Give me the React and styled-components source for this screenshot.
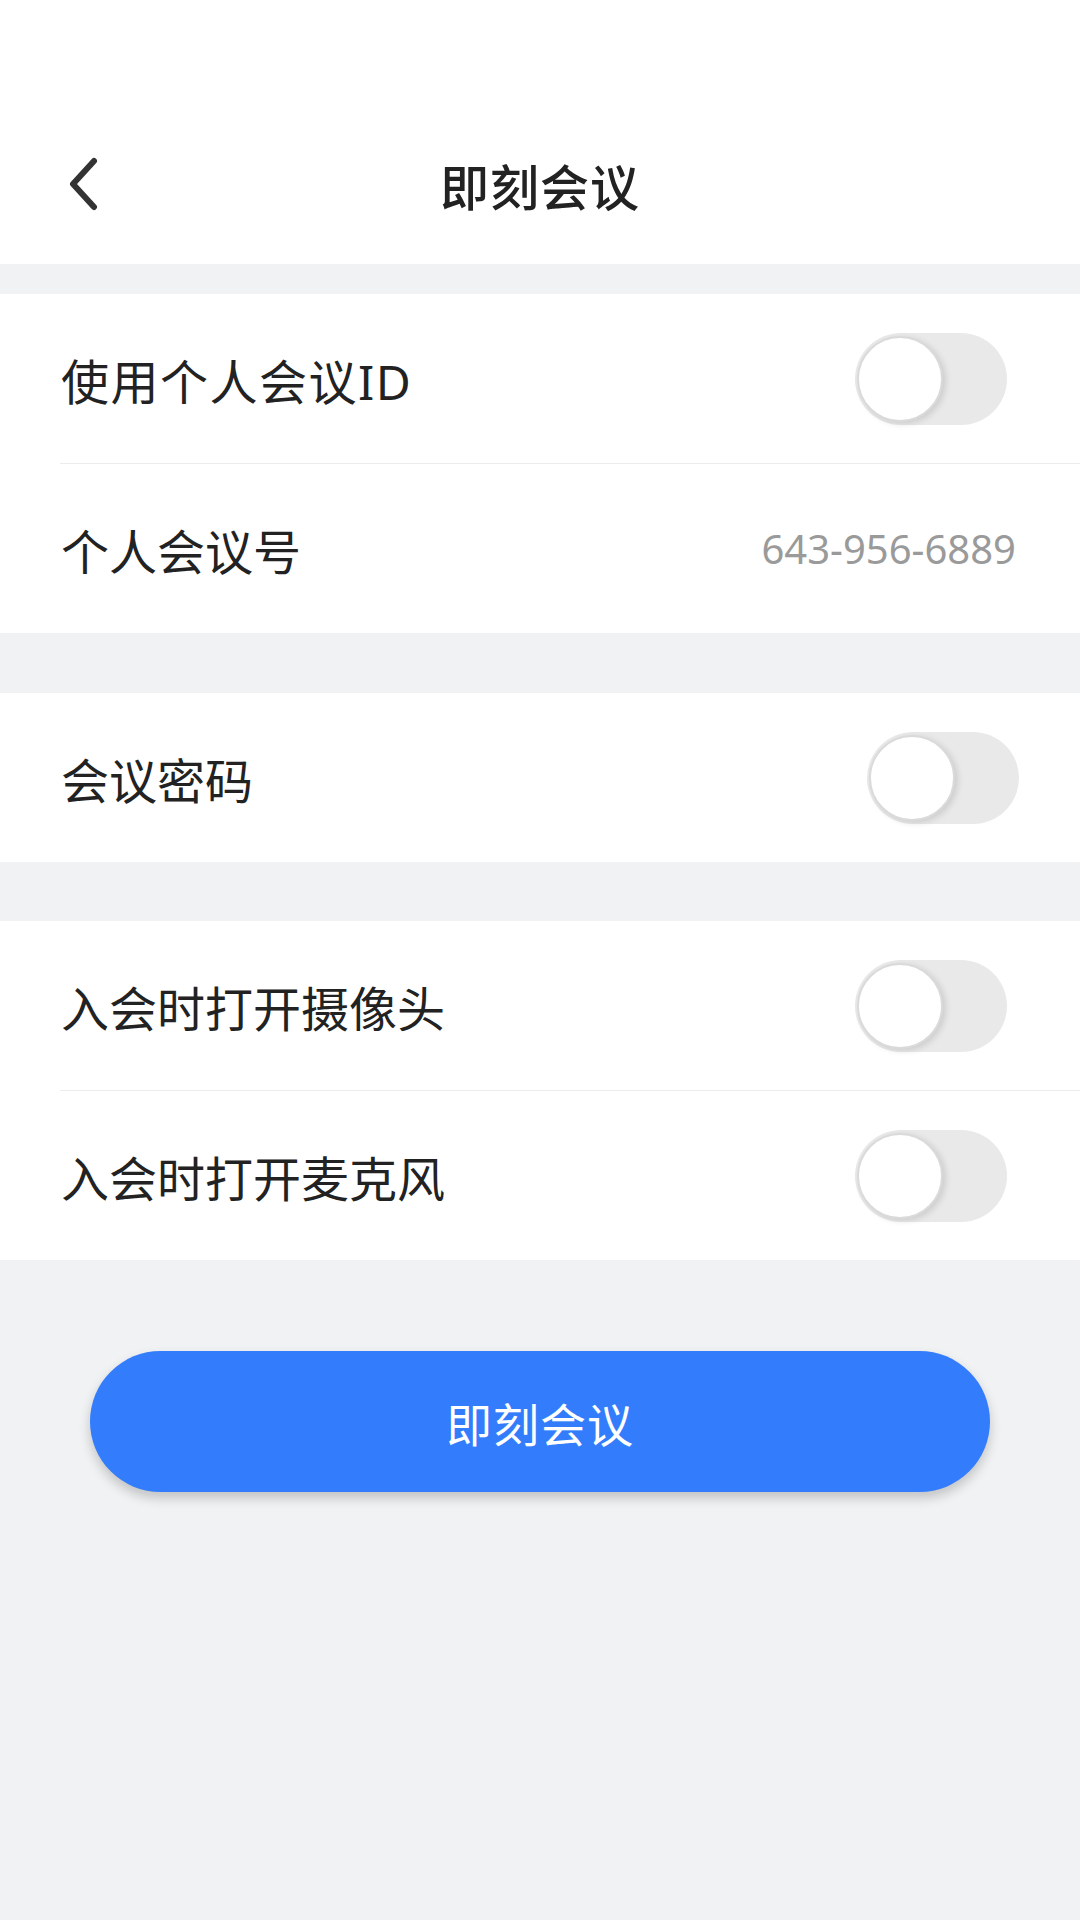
import React, { useState } from "react";
import styled, { createGlobalStyle } from "styled-components";

const GlobalStyle = createGlobalStyle`
  html, body {
    margin: 0;
    padding: 0;
    background: #f1f2f4;
  }
  body {
    font-family: "Noto Sans", "Noto Sans CJK SC", sans-serif;
    color: #222;
  }
`;

const Page = styled.div`
  width: 1080px;
  min-height: 1920px;
  background: #f1f2f4;
  display: flex;
  flex-direction: column;
`;

const Header = styled.header`
  background: #fff;
  padding-top: 104px;
`;

const NavBar = styled.div`
  position: relative;
  height: 160px;
  display: flex;
  align-items: center;
  justify-content: center;
`;

const BackButton = styled.button`
  position: absolute;
  left: 58px;
  top: 50%;
  transform: translateY(-50%);
  width: 52px;
  height: 64px;
  padding: 0;
  border: none;
  background: none;
  display: flex;
  align-items: center;
  justify-content: center;
  cursor: pointer;
`;

const Title = styled.h1`
  margin: 0;
  font-size: 49px;
  font-weight: 500;
  color: #222;
  letter-spacing: 1px;
`;

const Section = styled.section`
  background: #fff;
  margin-top: ${({ gap }) => gap}px;
`;

const Row = styled.div`
  height: 169px;
  display: flex;
  align-items: center;
  justify-content: space-between;
  padding-left: 61px;
  padding-right: ${({ right }) => right}px;
`;

const Divider = styled.div`
  height: 1px;
  margin-left: 60px;
  background: #ececec;
`;

const Label = styled.span`
  font-size: 48px;
  color: #222;
  letter-spacing: ${({ spacing }) => spacing || 0}px;
`;

const Value = styled.span`
  font-family: "Noto Sans", sans-serif;
  font-size: 40px;
  color: #9a9a9a;
`;

const Track = styled.button`
  position: relative;
  width: 152px;
  height: 92px;
  padding: 0;
  border: none;
  border-radius: 46px;
  background: ${({ on }) => (on ? "#337dfc" : "#e9e9e9")};
  cursor: pointer;
  transition: background 0.2s;
`;

const Knob = styled.span`
  position: absolute;
  top: 3px;
  left: ${({ on }) => (on ? "63px" : "2px")};
  width: 82px;
  height: 82px;
  border-radius: 50%;
  background: #fff;
  border: 2px solid #dadada;
  box-shadow: 3px 2px 6px rgba(0, 0, 0, 0.12);
  transition: left 0.2s;
`;

const Footer = styled.div`
  display: flex;
  justify-content: center;
  padding-top: 91px;
`;

const PrimaryButton = styled.button`
  width: 900px;
  height: 141px;
  border: none;
  border-radius: 71px;
  background: #337dfc;
  color: #fff;
  font-family: "Noto Sans", "Noto Sans CJK SC", sans-serif;
  font-size: 46px;
  letter-spacing: 1px;
  box-shadow: 0 6px 12px rgba(0, 0, 0, 0.2);
  cursor: pointer;
`;

const Toggle = ({ value, onChange }) => (
  <Track on={value ? 1 : 0} onClick={() => onChange(!value)}>
    <Knob on={value ? 1 : 0} />
  </Track>
);

const ChevronLeft = () => (
  <svg width="36" height="54" viewBox="0 0 36 54" fill="none">
    <path
      d="M28 4 L7 27 L28 50"
      stroke="#333"
      strokeWidth="6"
      strokeLinecap="round"
      strokeLinejoin="round"
    />
  </svg>
);

const App = () => {
  const [usePersonal, setUsePersonal] = useState(false);
  const [password, setPassword] = useState(false);
  const [camera, setCamera] = useState(false);
  const [mic, setMic] = useState(false);

  return (
    <Page>
      <GlobalStyle />
      <Header>
        <NavBar>
          <BackButton aria-label="返回">
            <ChevronLeft />
          </BackButton>
          <Title>即刻会议</Title>
        </NavBar>
      </Header>

      <Section gap={30}>
        <Row right={73}>
          <Label spacing={1.5}>使用个人会议ID</Label>
          <Toggle value={usePersonal} onChange={setUsePersonal} />
        </Row>
        <Divider />
        <Row right={64}>
          <Label>个人会议号</Label>
          <Value>643-956-6889</Value>
        </Row>
      </Section>

      <Section gap={60}>
        <Row right={61}>
          <Label>会议密码</Label>
          <Toggle value={password} onChange={setPassword} />
        </Row>
      </Section>

      <Section gap={59}>
        <Row right={73}>
          <Label>入会时打开摄像头</Label>
          <Toggle value={camera} onChange={setCamera} />
        </Row>
        <Divider />
        <Row right={73}>
          <Label>入会时打开麦克风</Label>
          <Toggle value={mic} onChange={setMic} />
        </Row>
      </Section>

      <Footer>
        <PrimaryButton>即刻会议</PrimaryButton>
      </Footer>
    </Page>
  );
};

export default App;
